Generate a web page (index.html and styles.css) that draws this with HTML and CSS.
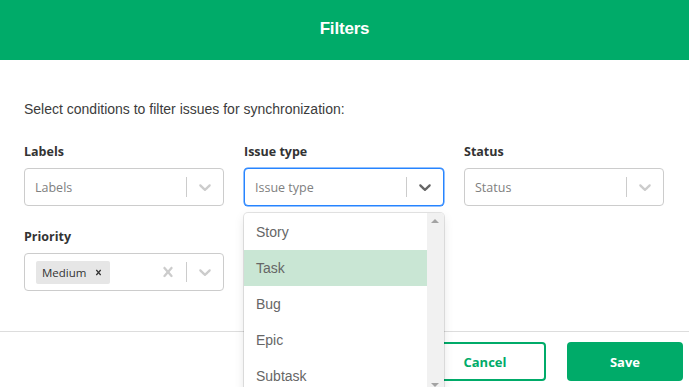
FILE: index.html
```html
<!DOCTYPE html>
<html lang="en">
<head>
  <meta charset="UTF-8">
  <meta name="viewport" content="width=device-width, initial-scale=1.0">
  <title>Filters</title>
  <link rel="stylesheet" href="styles.css">
</head>
<body>
  <div class="modal">
    <header class="modal-header">
      <h1>Filters</h1>
    </header>

    <main class="modal-body">
      <p class="intro">Select conditions to filter issues for synchronization:</p>

      <div class="fields">
        <div class="field">
          <label class="field-label">Labels</label>
          <div class="select">
            <div class="select-value placeholder">Labels</div>
            <div class="indicators">
              <span class="separator"></span>
              <span class="indicator">
                <svg viewBox="0 0 20 20" width="20" height="20"><path d="M4.516 7.548c0.436-0.446 1.043-0.481 1.576 0l3.908 3.747 3.908-3.747c0.533-0.481 1.141-0.446 1.574 0 0.436 0.445 0.408 1.197 0 1.615-0.406 0.418-4.695 4.502-4.695 4.502-0.217 0.223-0.502 0.335-0.787 0.335s-0.57-0.112-0.789-0.335c0 0-4.287-4.084-4.695-4.502s-0.436-1.17 0-1.615z"/></svg>
              </span>
            </div>
          </div>
        </div>

        <div class="field">
          <label class="field-label">Issue type</label>
          <div class="select-wrap">
            <div class="select focused">
              <div class="select-value placeholder">Issue type</div>
              <div class="indicators">
                <span class="separator"></span>
                <span class="indicator">
                  <svg viewBox="0 0 20 20" width="20" height="20"><path d="M4.516 7.548c0.436-0.446 1.043-0.481 1.576 0l3.908 3.747 3.908-3.747c0.533-0.481 1.141-0.446 1.574 0 0.436 0.445 0.408 1.197 0 1.615-0.406 0.418-4.695 4.502-4.695 4.502-0.217 0.223-0.502 0.335-0.787 0.335s-0.57-0.112-0.789-0.335c0 0-4.287-4.084-4.695-4.502s-0.436-1.17 0-1.615z"/></svg>
                </span>
              </div>
            </div>

            <div class="menu">
              <ul class="options">
                <li>Story</li>
                <li class="active">Task</li>
                <li>Bug</li>
                <li>Epic</li>
                <li>Subtask</li>
              </ul>
              <div class="scrollbar">
                <span class="arrow up"></span>
                <span class="arrow down"></span>
              </div>
            </div>
          </div>
        </div>

        <div class="field">
          <label class="field-label">Status</label>
          <div class="select">
            <div class="select-value placeholder">Status</div>
            <div class="indicators">
              <span class="separator"></span>
              <span class="indicator">
                <svg viewBox="0 0 20 20" width="20" height="20"><path d="M4.516 7.548c0.436-0.446 1.043-0.481 1.576 0l3.908 3.747 3.908-3.747c0.533-0.481 1.141-0.446 1.574 0 0.436 0.445 0.408 1.197 0 1.615-0.406 0.418-4.695 4.502-4.695 4.502-0.217 0.223-0.502 0.335-0.787 0.335s-0.57-0.112-0.789-0.335c0 0-4.287-4.084-4.695-4.502s-0.436-1.17 0-1.615z"/></svg>
              </span>
            </div>
          </div>
        </div>

        <div class="field">
          <label class="field-label">Priority</label>
          <div class="select">
            <div class="select-value">
              <span class="chip">
                <span class="chip-text">Medium</span>
                <span class="chip-remove">
                  <svg viewBox="0 0 20 20" width="11" height="11"><path d="M14.348 14.849c-0.469 0.469-1.229 0.469-1.697 0l-2.651-3.030-2.651 3.029c-0.469 0.469-1.229 0.469-1.697 0-0.469-0.469-0.469-1.229 0-1.697l2.758-3.15-2.759-3.152c-0.469-0.469-0.469-1.228 0-1.697s1.228-0.469 1.697 0l2.652 3.031 2.651-3.031c0.469-0.469 1.228-0.469 1.697 0s0.469 1.229 0 1.697l-2.758 3.152 2.758 3.150c0.469 0.469 0.469 1.229 0 1.698z"/></svg>
                </span>
              </span>
            </div>
            <div class="indicators">
              <span class="indicator">
                <svg viewBox="0 0 20 20" width="20" height="20"><path d="M14.348 14.849c-0.469 0.469-1.229 0.469-1.697 0l-2.651-3.030-2.651 3.029c-0.469 0.469-1.229 0.469-1.697 0-0.469-0.469-0.469-1.229 0-1.697l2.758-3.15-2.759-3.152c-0.469-0.469-0.469-1.228 0-1.697s1.228-0.469 1.697 0l2.652 3.031 2.651-3.031c0.469-0.469 1.228-0.469 1.697 0s0.469 1.229 0 1.697l-2.758 3.152 2.758 3.15c0.469 0.469 0.469 1.229 0 1.698z"/></svg>
              </span>
              <span class="separator"></span>
              <span class="indicator">
                <svg viewBox="0 0 20 20" width="20" height="20"><path d="M4.516 7.548c0.436-0.446 1.043-0.481 1.576 0l3.908 3.747 3.908-3.747c0.533-0.481 1.141-0.446 1.574 0 0.436 0.445 0.408 1.197 0 1.615-0.406 0.418-4.695 4.502-4.695 4.502-0.217 0.223-0.502 0.335-0.787 0.335s-0.57-0.112-0.789-0.335c0 0-4.287-4.084-4.695-4.502s-0.436-1.17 0-1.615z"/></svg>
              </span>
            </div>
          </div>
        </div>
      </div>
    </main>

    <footer class="modal-footer">
      <button class="btn btn-cancel">Cancel</button>
      <button class="btn btn-save">Save</button>
    </footer>
  </div>
</body>
</html>
```

FILE: styles.css
```css
* {
  margin: 0;
  padding: 0;
  box-sizing: border-box;
}

body {
  width: 689px;
  height: 387px;
  overflow: hidden;
  background: #fff;
  font-family: 'Liberation Sans', Arial, sans-serif;
}

.modal-header {
  height: 60px;
  background: #00ab69;
  display: flex;
  justify-content: center;
  align-items: center;
}

.modal-header h1 {
  color: #fff;
  font-size: 17px;
  font-weight: bold;
  letter-spacing: -0.2px;
  padding-bottom: 2px;
}

.modal-body {
  height: 271px;
  padding: 41px 25px 0 24px;
}

.intro {
  font-size: 14px;
  line-height: 16px;
  color: #3c3c3c;
  margin-bottom: 27px;
}

.fields {
  display: grid;
  grid-template-columns: repeat(3, 200px);
  column-gap: 20px;
  row-gap: 23px;
}

.field-label {
  display: block;
  font-family: 'Open Sans', sans-serif;
  font-size: 12.5px;
  font-weight: 700;
  line-height: 16px;
  color: #333;
  margin-bottom: 8px;
}

.select-wrap {
  position: relative;
}

.select {
  height: 38px;
  border: 1px solid #ccc;
  border-radius: 4px;
  display: flex;
  align-items: center;
  background: #fff;
}

.select.focused {
  border-color: #2684ff;
  box-shadow: 0 0 0 0.5px #2684ff;
}

.select-value {
  flex: 1;
  padding: 0 10px;
  display: flex;
  align-items: center;
  font-family: 'Open Sans', sans-serif;
  font-size: 12.5px;
  color: #333;
}

.placeholder {
  color: #808080;
}

.indicators {
  display: flex;
  align-items: center;
  align-self: stretch;
}

.separator {
  width: 1px;
  height: 20px;
  background: #ccc;
}

.indicator {
  display: flex;
  padding: 8px;
  fill: #ccc;
}

.focused .indicator {
  fill: #666;
}

.chip {
  display: flex;
  align-items: center;
  height: 23px;
  margin-left: 1px;
  background: #e6e6e6;
  border-radius: 2px;
}

.chip-text {
  font-size: 11.5px;
  color: #333;
  padding: 0 3px 0 6px;
}

.chip-remove {
  display: flex;
  padding: 0 6px 0 4px;
  fill: #333;
}

.menu {
  position: absolute;
  top: calc(100% + 7px);
  left: 0;
  width: 200px;
  height: 180px;
  background: #fff;
  border-radius: 4px;
  box-shadow: 0 0 0 1px rgba(0, 0, 0, 0.1), 0 4px 11px rgba(0, 0, 0, 0.1);
  display: flex;
  overflow: hidden;
  z-index: 2;
}

.options {
  flex: 1;
  list-style: none;
  padding-top: 1px;
}

.options li {
  height: 36px;
  line-height: 36px;
  padding-left: 12px;
  font-size: 14px;
  color: #666;
}

.options li.active {
  background: #c9e6d4;
}

.scrollbar {
  width: 17px;
  background: #f1f1f1;
  position: relative;
}

.arrow {
  position: absolute;
  left: 4px;
  width: 0;
  height: 0;
  border-left: 4px solid transparent;
  border-right: 4px solid transparent;
}

.arrow.up {
  top: 6px;
  border-bottom: 4px solid #a3a3a3;
}

.arrow.down {
  bottom: 6px;
  border-top: 4px solid #a3a3a3;
}

.modal-footer {
  border-top: 1px solid #ddd;
  padding: 10px 6px 0 0;
  display: flex;
  justify-content: flex-end;
  gap: 21px;
}

.btn {
  height: 39px;
  border-radius: 4px;
  font-family: 'Open Sans', sans-serif;
  font-size: 13px;
  font-weight: 700;
  cursor: pointer;
}

.btn-cancel {
  width: 122px;
  background: #fff;
  color: #00ab69;
  border: 2px solid #00ab69;
}

.btn-save {
  width: 116px;
  background: #00ab69;
  color: #fff;
  border: none;
}
```
